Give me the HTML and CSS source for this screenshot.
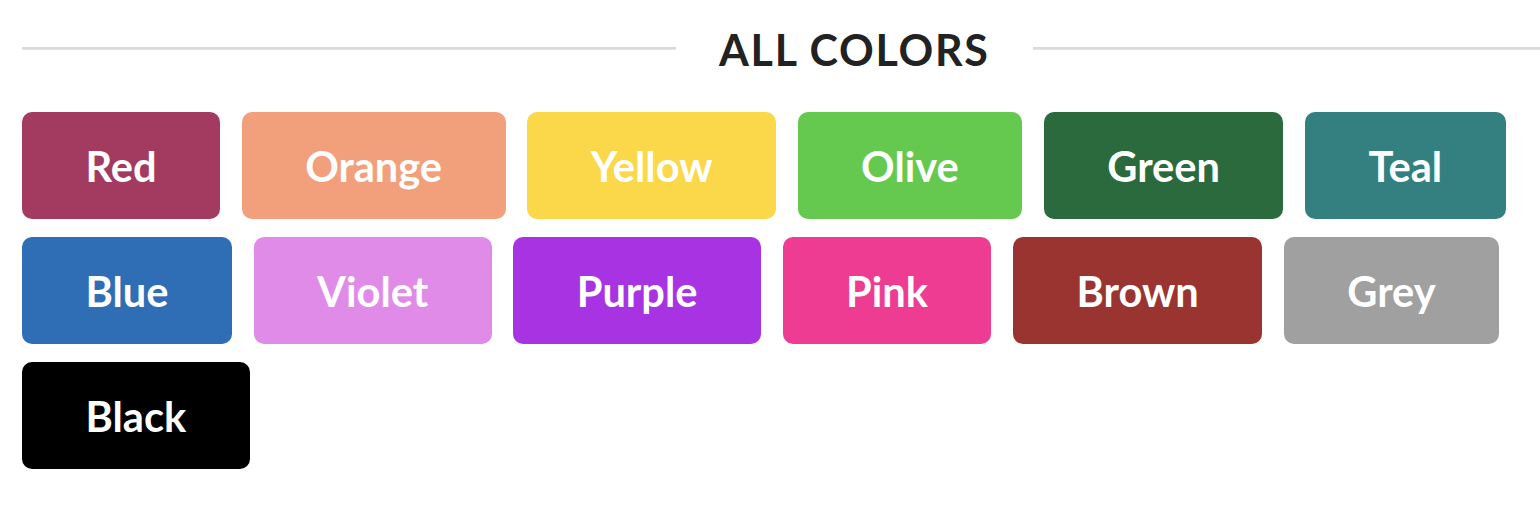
FILE: index.html
```html
<!DOCTYPE html>
<html lang="en">
<head>
<meta charset="utf-8">
<title>All Colors</title>
<link rel="stylesheet" href="styles.css">
</head>
<body>
<div class="page">
  <h4 class="divider"><span class="divider-line left"></span><span class="divider-text">All Colors</span><span class="divider-line right"></span></h4>
  <div class="buttons">
    <button class="btn red">Red</button>
    <button class="btn orange">Orange</button>
    <button class="btn yellow">Yellow</button>
    <button class="btn olive">Olive</button>
    <button class="btn green">Green</button>
    <button class="btn teal">Teal</button>
    <button class="btn blue">Blue</button>
    <button class="btn violet">Violet</button>
    <button class="btn purple">Purple</button>
    <button class="btn pink">Pink</button>
    <button class="btn brown">Brown</button>
    <button class="btn grey">Grey</button>
    <button class="btn black">Black</button>
  </div>
</div>
</body>
</html>
```

FILE: styles.css
```css
html, body {
  margin: 0;
  padding: 0;
  background: #ffffff;
}

body {
  font-family: Lato, "Liberation Sans", sans-serif;
}

.page {
  padding: 28px 0 0 22px;
}

.divider {
  display: flex;
  align-items: center;
  margin: 0;
  height: 43px;
  font-size: 43px;
  line-height: 1;
  font-weight: 700;
  text-transform: uppercase;
  letter-spacing: 0.04em;
  color: #222222;
}

.divider-line {
  height: 0;
  border-top: 2px solid #dadada;
  border-bottom: 1px solid #e4e4e4;
  margin-top: -2px;
}

.divider-line.left {
  flex: 0 0 654px;
}

.divider-line.right {
  flex: 1;
}

.divider-text {
  padding: 0 43px 0 43px;
}

.buttons {
  display: flex;
  flex-wrap: wrap;
  column-gap: 21.5px;
  row-gap: 18px;
  margin-top: 41px;
}

.btn {
  display: flex;
  align-items: center;
  justify-content: center;
  box-sizing: border-box;
  height: 107px;
  padding: 3px 63.5px 0 63.5px;
  border: none;
  border-radius: 10px;
  font-family: Lato, "Liberation Sans", sans-serif;
  font-size: 41.6px;
  line-height: 1;
  font-weight: 700;
  color: #ffffff;
  cursor: pointer;
}

.red { background: #a33a5f; }
.orange { background: #f2a07c; }
.yellow { background: #fbd84a; }
.olive { background: #64c94e; }
.green { background: #2a6a3d; }
.teal { background: #347f80; }
.blue { background: #2f6eb4; }
.violet { background: #e08be8; }
.purple { background: #a833e3; }
.pink { background: #ee3c92; }
.brown { background: #993431; }
.grey { background: #a0a0a0; }
.black { background: #000000; }
```
